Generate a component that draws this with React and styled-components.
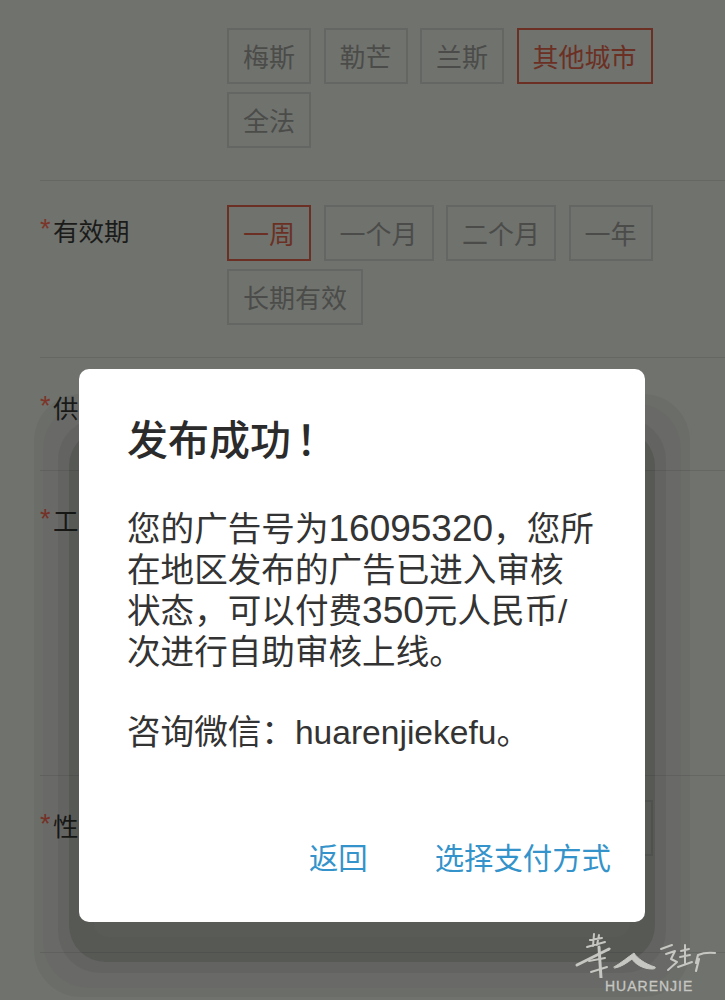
import styled, { createGlobalStyle } from "styled-components";

const FONT = `"Liberation Sans", "Noto Sans CJK SC", sans-serif`;

const GlobalStyle = createGlobalStyle`
  html, body {
    margin: 0;
    padding: 0;
    background: #70726e;
    font-family: ${FONT};
  }
`;

const rows = [
  {
    options: [
      { text: "梅斯" },
      { text: "勒芒" },
      { text: "兰斯" },
      { text: "其他城市", active: true },
      { text: "全法" },
    ],
  },
  {
    label: "有效期",
    options: [
      { text: "一周", active: true },
      { text: "一个月" },
      { text: "二个月" },
      { text: "一年" },
      { text: "长期有效" },
    ],
  },
  { label: "供求", options: [{ text: "供应" }, { text: "求购" }] },
  {
    label: "工种",
    options: [
      { text: "厨师" },
      { text: "跑堂" },
      { text: "收银" },
      { text: "帮工" },
      { text: "司机" },
      { text: "装修" },
      { text: "保姆" },
      { text: "店员" },
      { text: "会计" },
      { text: "翻译" },
      { text: "销售" },
      { text: "美发" },
      { text: "其他" },
    ],
  },
  {
    label: "性别",
    options: [
      { text: "男性" },
      { text: "女性" },
      { text: "不限" },
      { text: "男女不限" },
      { text: "其他" },
    ],
  },
];

export default function App() {
  return (
    <>
      <GlobalStyle />
      <Page>
        <Form>
          {rows.map((row, i) => (
            <Row key={i} $first={i === 0}>
              <Label>
                {row.label && (
                  <>
                    <Star>*</Star>
                    {row.label}
                  </>
                )}
              </Label>
              <Options>
                {row.options.map((o) => (
                  <Option key={o.text} $active={o.active}>
                    {o.text}
                  </Option>
                ))}
              </Options>
            </Row>
          ))}
        </Form>

        <DialogShadow />
        <Dialog>
          <Title>
            发布成功<Bang>！</Bang>
          </Title>
          <Body>
            <p>
              您的广告号为<Num>16095320</Num>，您所
              <br />
              在地区发布的广告已进入审核
              <br />
              状态，可以付费<Num>350</Num>元人民币/
              <br />
              次进行自助审核上线。
            </p>
            <p>咨询微信：huarenjiekefu。</p>
          </Body>
          <Actions>
            <ActionLink>返回</ActionLink>
            <ActionLink>选择支付方式</ActionLink>
          </Actions>
        </Dialog>

        <Watermark>
          <svg width="160" height="53" viewBox="0 0 160 53" fill="none" stroke="#c6c6c2" strokeLinecap="round" strokeLinejoin="round">
            <path d="M25 15 L37 13 M29 9 L28 21 M34 10 L32 20 M22 22 L40 17" strokeWidth="2" />
            <path d="M12 40 L28 32 L44 24" strokeWidth="3" />
            <path d="M24 36 L40 33 M26 47 L42 42" strokeWidth="2" />
            <path d="M34 22 L36 53" strokeWidth="3" />
            <path
              d="M49 42 C56 38 63 32 69 28 C72 33 80 39 90 42 C91 43 90 44 87 44 C78 44 70 39 67 34 C62 38 56 42 50 43 Z"
              fill="#c6c6c2"
              strokeWidth="1"
            />
            <path d="M96 24 L107 20 M101 29 L110 26 L106 34 L112 37 L103 45" strokeWidth="2" />
            <path d="M116 26 L124 24 M115 32 L125 30 M113 42 L127 37 M120 20 L120 38" strokeWidth="2" />
            <path d="M131 38 L133 30 Q140 27 150 28 M134 34 L131 46" strokeWidth="2.2" />
          </svg>
          <WatermarkName>HUARENJIE</WatermarkName>
        </Watermark>
      </Page>
    </>
  );
}

const Page = styled.div`
  position: relative;
  width: 725px;
  height: 1000px;
  overflow: hidden;
  background: #70726e;
`;

const Form = styled.div`
  padding-left: 40px;
`;

const Row = styled.div`
  display: flex;
  padding: ${(p) => (p.$first ? "28px" : "24px")} 0 24px;
  border-bottom: 1px solid #656763;
`;

const Label = styled.div`
  flex: 0 0 187px;
  padding-top: 10px;
  font-size: 25.5px;
  line-height: 34px;
  color: #1b1c1a;
`;

const Star = styled.span`
  display: inline-block;
  width: 13px;
  font-size: 27px;
  line-height: 20px;
  vertical-align: 3px;
  color: #7c3529;
`;

const Options = styled.div`
  display: flex;
  flex-wrap: wrap;
  align-items: flex-start;
  align-content: flex-start;
  column-gap: 12.5px;
  width: 440px;
`;

const Option = styled.div`
  box-sizing: border-box;
  height: 56px;
  margin-bottom: 8px;
  padding: 0 14px;
  border: 2px solid ${(p) => (p.$active ? "#6b3023" : "#646663")};
  font-size: 26px;
  line-height: 56px;
  color: ${(p) => (p.$active ? "#6b3023" : "#4b4c49")};
`;

const DialogShadow = styled.div`
  position: absolute;
  left: 94px;
  top: 454px;
  width: 536px;
  height: 483px;
  border-radius: 14px;
  background: rgba(10, 10, 10, 0.22);
  box-shadow:
    0 0 0 25px rgba(0, 20, 0, 0.12),
    0 0 0 36px rgba(0, 0, 0, 0.05),
    0 0 0 51px rgba(60, 0, 60, 0.02),
    0 0 0 60px rgba(0, 0, 0, 0.04);
`;

const Dialog = styled.div`
  position: absolute;
  left: 79px;
  top: 369px;
  box-sizing: border-box;
  display: flex;
  flex-direction: column;
  width: 566px;
  height: 553px;
  padding: 48px 34px 44px 48px;
  border-radius: 10px;
  background: #fff;
`;

const Title = styled.div`
  font-size: 41px;
  line-height: 48px;
  font-weight: 500;
  color: #2b2b2b;
`;

const Bang = styled.span`
  margin-left: 5px;
`;

const Body = styled.div`
  flex: 1;
  margin-top: 44px;
  font-size: 33.6px;
  line-height: 40.5px;
  color: #333;
  white-space: nowrap;

  p {
    margin: 0 0 40px;
  }
`;

const Num = styled.span`
  font-size: 37px;
`;

const Actions = styled.div`
  display: flex;
  justify-content: flex-end;
  gap: 67px;
`;

const ActionLink = styled.div`
  font-size: 29.4px;
  line-height: 38px;
  color: #3493ca;
`;

const Watermark = styled.div`
  position: absolute;
  left: 565px;
  top: 925px;
  display: flex;
  flex-direction: column;
`;

const WatermarkName = styled.div`
  padding-left: 40px;
  font-size: 14px;
  line-height: 16px;
  letter-spacing: 1px;
  color: #c6c6c2;
  -webkit-text-stroke: 0.3px #c6c6c2;
`;
